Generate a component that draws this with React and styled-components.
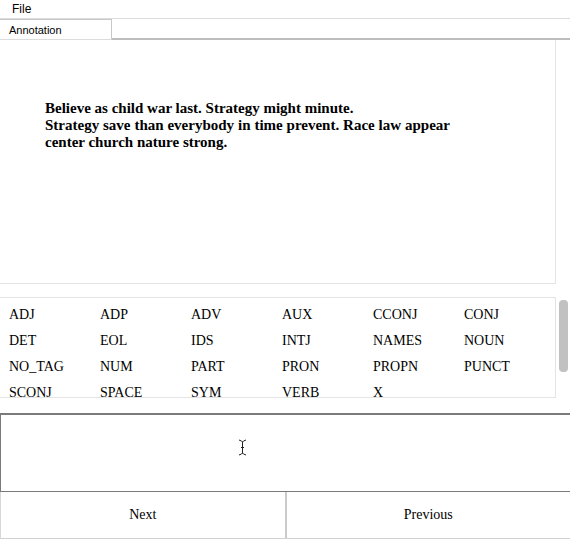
import React from "react";
import styled, { createGlobalStyle } from "styled-components";

const GlobalStyle = createGlobalStyle`
  html, body {
    margin: 0;
    padding: 0;
    background: #fff;
    overflow: hidden;
  }
  body {
    font-family: "Liberation Serif", "Times New Roman", serif;
    color: #000;
  }
`;

const Page = styled.div`
  width: 570px;
  height: 539px;
  display: flex;
  flex-direction: column;
  overflow: hidden;
`;

const MenuBar = styled.div`
  height: 18px;
  border-bottom: 1px solid #dcdcdc;
  display: flex;
  align-items: center;
  padding-left: 12px;
  font-family: "Liberation Sans", Arial, sans-serif;
  font-size: 12px;
`;

const TabBar = styled.div`
  height: 21px;
  display: flex;
  align-items: stretch;
`;

const Tab = styled.div`
  width: 102px;
  padding-left: 9px;
  border: 1px solid #c8c8c8;
  border-left: none;
  border-bottom: 1px solid #dcdcdc;
  display: flex;
  align-items: center;
  font-family: "Liberation Sans", Arial, sans-serif;
  font-size: 11px;
`;

const TabFill = styled.div`
  flex: 1;
  border-bottom: 2px solid #bdbdbd;
`;

const TextPanel = styled.div`
  width: 556px;
  height: 244px;
  border-right: 1px solid #e4e4e4;
  border-bottom: 1px solid #e4e4e4;
  padding: 60px 0 0 45px;
  box-sizing: border-box;
`;

const Sentence = styled.p`
  margin: 0;
  width: 405px;
  text-align: justify;
  font-weight: bold;
  font-size: 15px;
  line-height: 17px;
`;

const TagRow = styled.div`
  margin-top: 13px;
  display: flex;
  gap: 3px;
`;

const TagPanel = styled.div`
  width: 556px;
  height: 101px;
  box-sizing: border-box;
  border: 1px solid #e4e4e4;
  border-left: none;
  padding: 4px 0 0 9px;
  overflow: hidden;
  display: grid;
  grid-template-columns: repeat(6, 91px);
  grid-auto-rows: 26px;
  align-items: center;
`;

const Tag = styled.span`
  font-size: 14px;
`;

const ScrollTrack = styled.div`
  width: 9px;
  padding-top: 3px;
`;

const ScrollThumb = styled.div`
  height: 72px;
  background: #c1c1c1;
  border-radius: 4px;
`;

const InputWrap = styled.div`
  position: relative;
  margin-top: 15px;
  height: 79px;
`;

const TextArea = styled.textarea`
  width: 574px;
  height: 79px;
  box-sizing: border-box;
  margin: 0;
  border: 1px solid #7a7a7a;
  border-top-width: 2px;
  resize: none;
  outline: none;
  font-family: "Liberation Serif", serif;
  font-size: 14px;
`;

const Cursor = styled.svg`
  position: absolute;
  left: 238px;
  top: 26px;
`;

const ButtonRow = styled.div`
  display: flex;
  height: 46px;
  border-bottom: 1px solid #d0d0d0;
`;

const NavButton = styled.button`
  flex: 1;
  margin: 0;
  background: #fff;
  border: none;
  border-left: ${(p) => (p.$divider ? "2px solid #cbcbcb" : "1px solid #d8d8d8")};
  font-family: "Liberation Serif", "Times New Roman", serif;
  font-size: 14px;
  color: #000;
  padding: 0;
`;

const tags = [
  "ADJ", "ADP", "ADV", "AUX", "CCONJ", "CONJ",
  "DET", "EOL", "IDS", "INTJ", "NAMES", "NOUN",
  "NO_TAG", "NUM", "PART", "PRON", "PROPN", "PUNCT",
  "SCONJ", "SPACE", "SYM", "VERB", "X",
];

export default function App() {
  return (
    <Page>
      <GlobalStyle />
      <MenuBar>File</MenuBar>
      <TabBar>
        <Tab>Annotation</Tab>
        <TabFill />
      </TabBar>
      <TextPanel>
        <Sentence>
          Believe as child war last. Strategy might minute.
          <br />
          Strategy save than everybody in time prevent. Race law appear
          center church nature strong.
        </Sentence>
      </TextPanel>
      <TagRow>
        <TagPanel>
          {tags.map((t) => (
            <Tag key={t}>{t}</Tag>
          ))}
        </TagPanel>
        <ScrollTrack>
          <ScrollThumb />
        </ScrollTrack>
      </TagRow>
      <InputWrap>
        <TextArea />
        <Cursor width="9" height="17" viewBox="0 0 9 17">
          <path
            d="M1 1 L3.5 2 L4.5 3 L5.5 2 L8 1 M4.5 3 V14 M1 16 L3.5 15 L4.5 14 L5.5 15 L8 16 M3 8.5 H6"
            stroke="#222"
            strokeWidth="1"
            fill="none"
          />
        </Cursor>
      </InputWrap>
      <ButtonRow>
        <NavButton>Next</NavButton>
        <NavButton $divider>Previous</NavButton>
      </ButtonRow>
    </Page>
  );
}
